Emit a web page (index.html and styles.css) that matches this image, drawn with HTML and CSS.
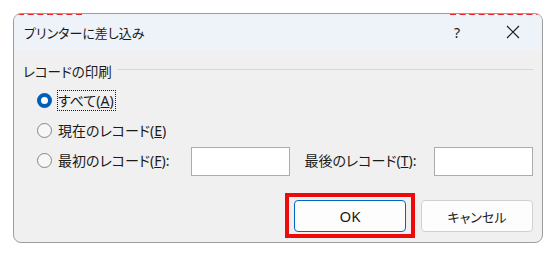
FILE: index.html
```html
<!DOCTYPE html>
<html lang="ja">
<head>
    <meta charset="UTF-8">
    <title>プリンターに差し込み</title>
    <link rel="stylesheet" href="styles.css">
</head>
<body>
    <div class="stage">
        <div class="dialog">
            <div class="titlebar">
                <span class="title">プリンターに差し込み</span>
                <span class="help">?</span>
                <span class="close">
                    <svg width="14" height="14" viewBox="0 0 14 14">
                        <path d="M1 1 L13 13 M13 1 L1 13" stroke="#1a1a1a" stroke-width="1.1" fill="none"/>
                    </svg>
                </span>
            </div>
            <div class="content">
                <div class="group-head">
                    <span class="group-title">レコードの印刷</span>
                    <span class="rule"></span>
                </div>
                <div class="options">
                    <div class="option">
                        <span class="radio checked"></span>
                        <span class="focus">すべて(<u>A</u>)</span>
                    </div>
                    <div class="option">
                        <span class="radio"></span>
                        <span class="text">現在のレコード(<u>E</u>)</span>
                    </div>
                    <div class="option">
                        <div class="range-label">
                            <span class="radio"></span>
                            <span class="text">最初のレコード(<u>F</u>):</span>
                        </div>
                        <input type="text" class="field">
                        <span class="last-label">最後のレコード(<u>T</u>):</span>
                        <input type="text" class="field">
                    </div>
                </div>
                <div class="actions">
                    <button class="btn primary marked">OK</button>
                    <button class="btn">キャンセル</button>
                </div>
            </div>
        </div>
    </div>
</body>
</html>
```

FILE: styles.css
```css
/* styles.css */

body {
    margin: 0;
    background-color: #ffffff;
    font-family: "Noto Sans", "Noto Sans CJK JP", sans-serif;
    font-size: 13px;
    color: #1a1a1a;
}

.stage {
    padding: 13px 0 0 13px;
}

.dialog {
    position: relative;
    width: 528px;
    height: 228px;
    border: 1px solid #9c9c9c;
    border-radius: 8px;
    background-color: #f0f0f0;
    overflow: hidden;
    display: flex;
    flex-direction: column;
}

.dialog::before,
.dialog::after {
    content: "";
    position: absolute;
    top: -1px;
    border-top: 2px dashed #e8262a;
    z-index: 2;
}

.dialog::before {
    left: 4px;
    width: 64px;
}

.dialog::after {
    right: 0;
    width: 92px;
}

.titlebar {
    height: 36px;
    background-color: #eef2f9;
    display: flex;
    align-items: center;
    padding-left: 10px;
}

.title {
    flex: 1;
    font-feature-settings: "palt";
    font-size: 13px;
}

.help {
    font-family: "Noto Sans", sans-serif;
    font-size: 14px;
    margin-right: 46px;
}

.close {
    display: flex;
    margin-right: 22px;
}

.content {
    flex: 1;
    padding: 12px 9px 10px 9px;
    display: flex;
    flex-direction: column;
}

.group-head {
    display: flex;
    align-items: center;
    height: 18px;
}

.group-title {
    font-feature-settings: "palt";
    font-size: 13.5px;
    white-space: nowrap;
}

.rule {
    flex: 1;
    height: 1px;
    background-color: #d6d6d6;
    margin-left: 5px;
    margin-top: -4px;
}

.options {
    margin-top: 5px;
    padding-left: 14px;
}

.option {
    display: flex;
    align-items: center;
    height: 30px;
    font-size: 14px;
    font-feature-settings: "palt";
}

.radio {
    width: 13px;
    height: 13px;
    border: 1px solid #858585;
    border-radius: 50%;
    background-color: #f7f7f7;
    margin-right: 6px;
    flex: none;
}

.radio.checked {
    width: 7px;
    height: 7px;
    border: 4px solid #005fb8;
    background-color: #ffffff;
}

.focus {
    border: 1px dotted #1a1a1a;
    padding: 0 1px 0 0;
    margin-left: -1px;
    line-height: 19px;
}

.range-label {
    display: flex;
    align-items: center;
    width: 155px;
}

.field {
    width: 97px;
    height: 27px;
    border: 1px solid #acacac;
    background-color: #ffffff;
    padding: 0;
    margin: 2px 0 0 0;
    box-sizing: content-box;
}

.last-label {
    padding-left: 14px;
    box-sizing: border-box;
    width: 144px;
}

.actions {
    margin-top: 25px;
    display: flex;
    justify-content: flex-end;
    gap: 15px;
}

.btn {
    position: relative;
    width: 112px;
    height: 32px;
    border: 1px solid #d0d0d0;
    border-radius: 4px;
    background-color: #fdfdfd;
    font-family: "Noto Sans", "Noto Sans CJK JP", sans-serif;
    font-size: 13px;
    color: #1a1a1a;
    font-feature-settings: "palt";
    padding: 0;
}

.btn.primary {
    border-color: #0067c0;
    font-size: 15px;
}

.btn.marked::after {
    content: "";
    position: absolute;
    top: -8px;
    left: -10px;
    right: -10px;
    bottom: -7px;
    border: 4px solid #ee0a0a;
}
```
